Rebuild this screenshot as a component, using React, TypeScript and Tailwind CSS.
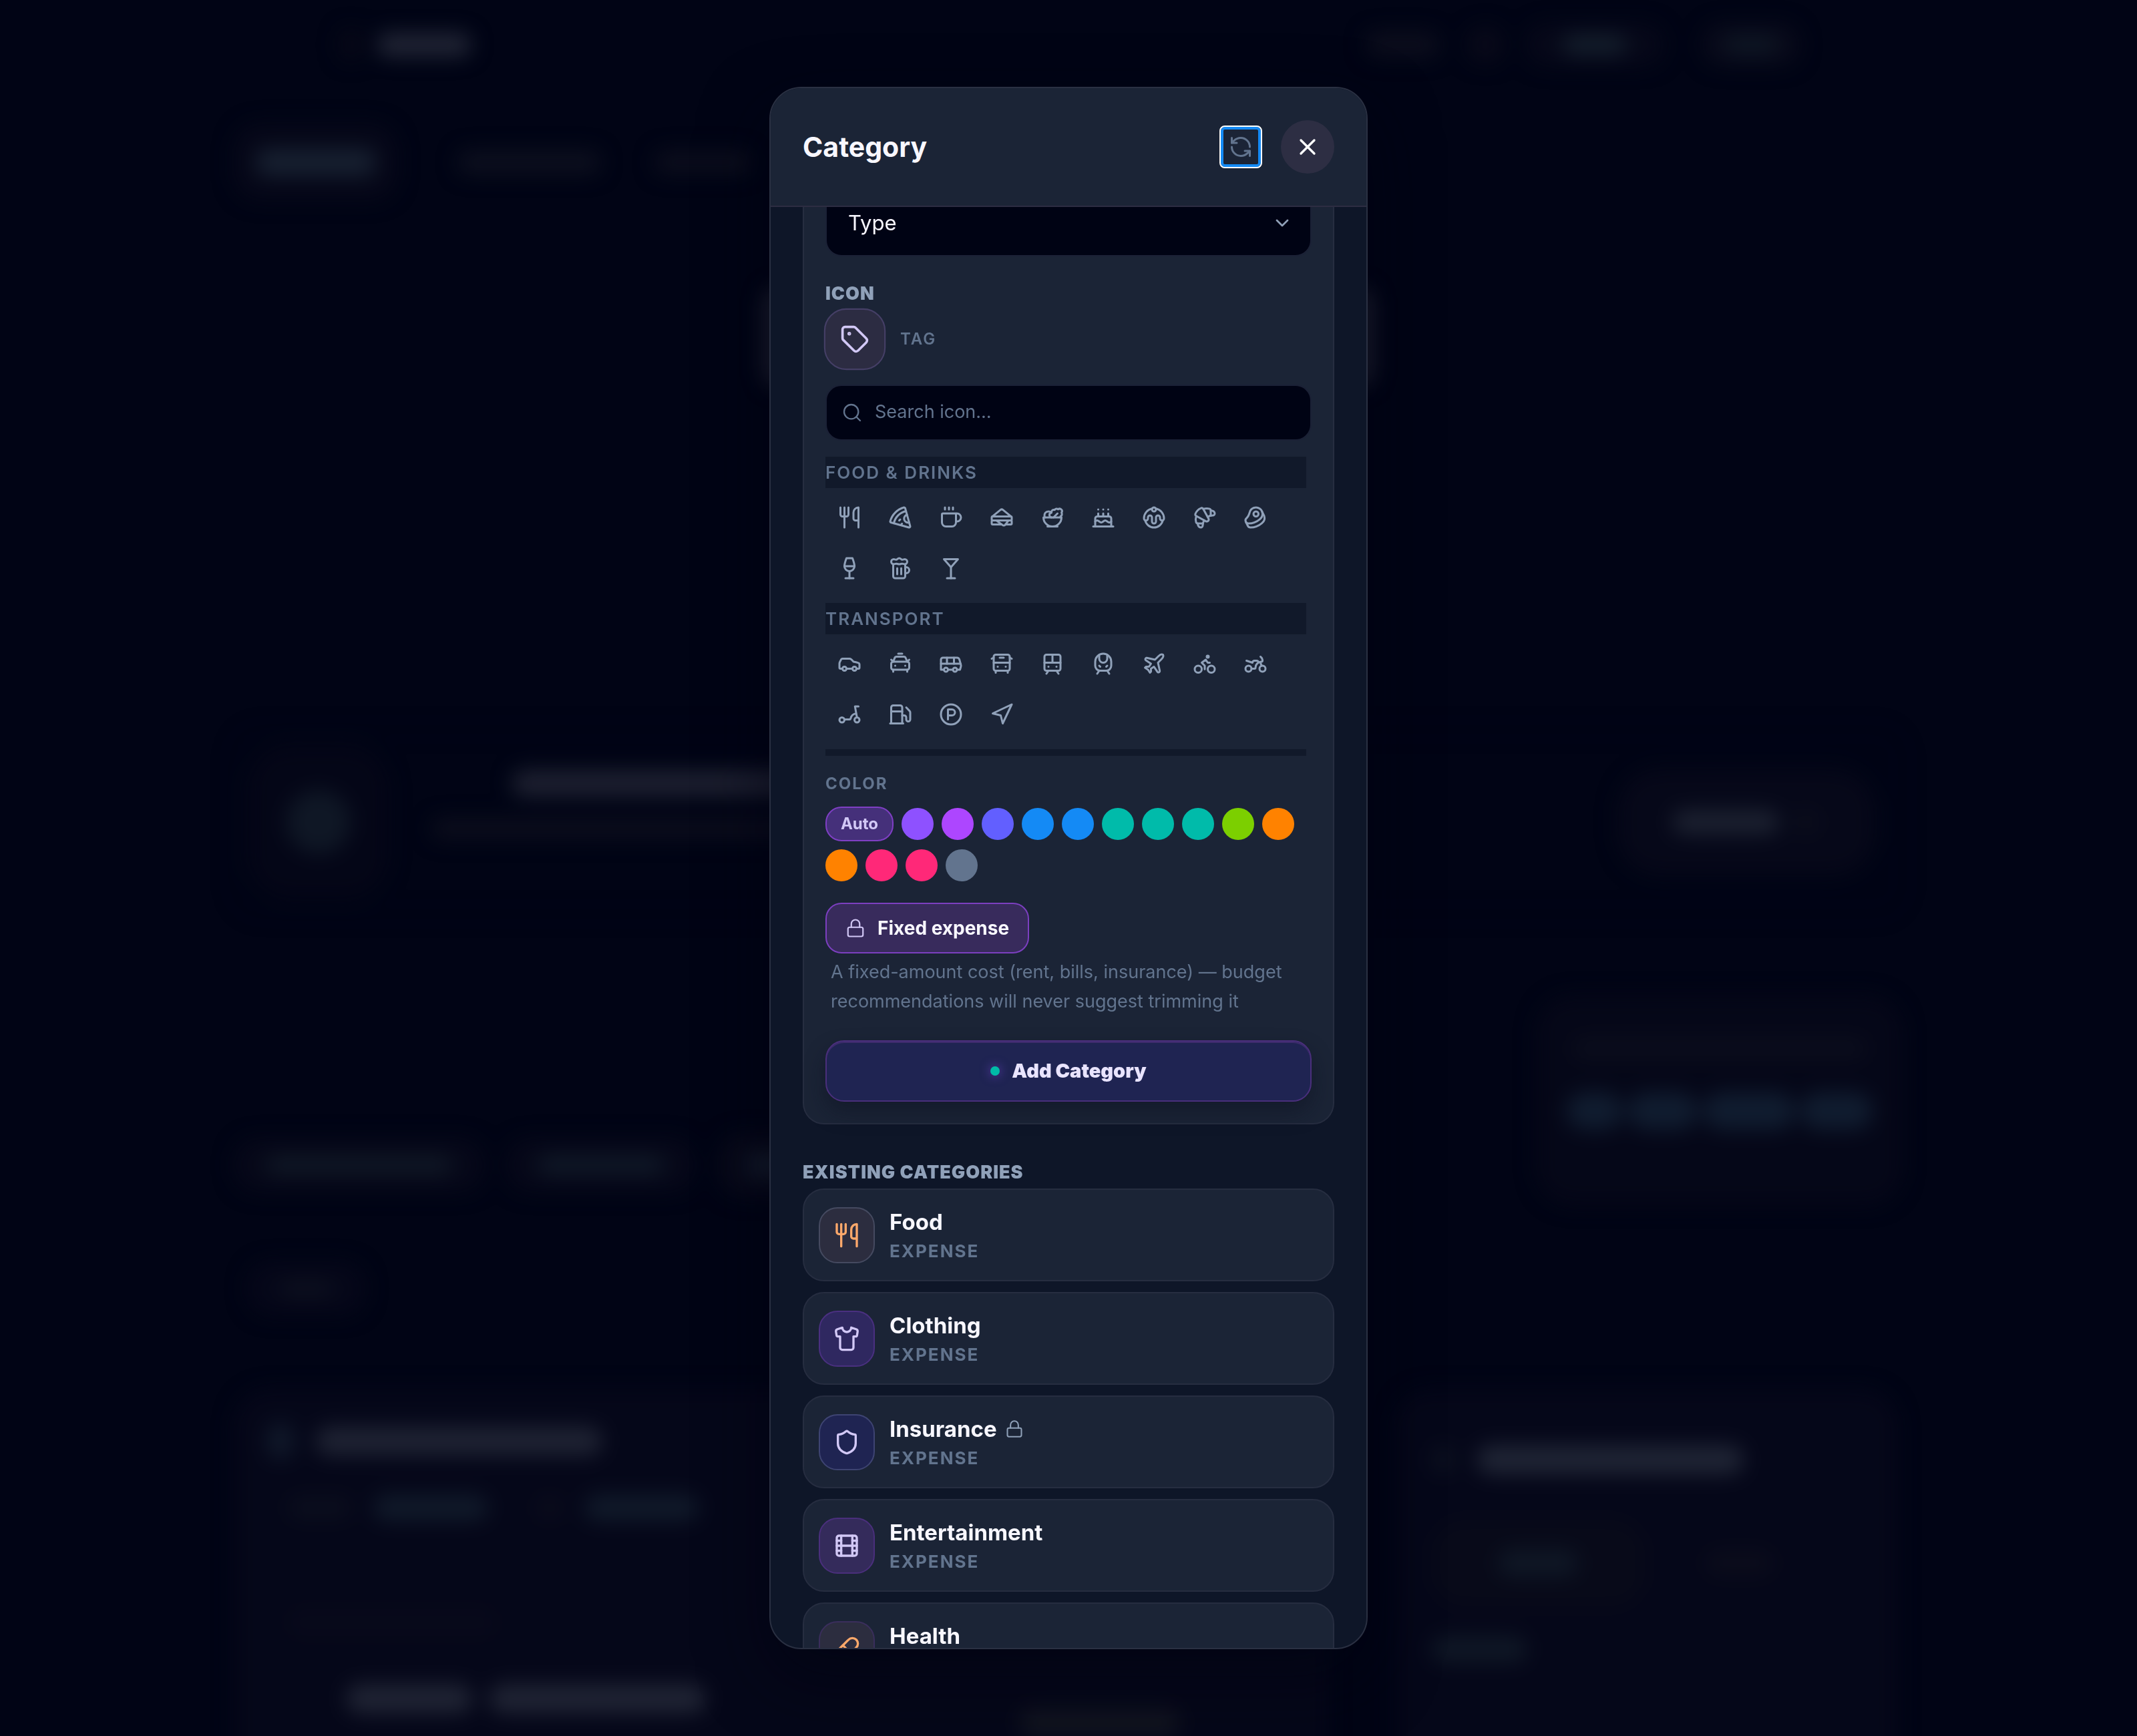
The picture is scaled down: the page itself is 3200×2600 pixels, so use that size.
import type { ReactNode } from 'react';
import {
  Beef,
  Beer,
  Bike,
  Bus,
  BusFront,
  Cake,
  Car,
  CarTaxiFront,
  ChevronDown,
  CircleParking,
  Coffee,
  Croissant,
  Dessert,
  Film,
  Fuel,
  Lock,
  Martini,
  Motorbike,
  Navigation,
  Pill,
  Pizza,
  Plane,
  RefreshCcw,
  Salad,
  Sandwich,
  Scooter,
  Search,
  Shield,
  Shirt,
  Tag,
  TrainFront,
  TramFront,
  Utensils,
  Wine,
  X,
  type LucideIcon,
} from 'lucide-react';
import clsx from 'clsx';

interface IconOption {
  name: string;
  icon: LucideIcon;
}

interface Category {
  name: string;
  icon: LucideIcon;
  tone: string;
  fixed?: boolean;
}

const foodIcons: IconOption[] = [
  { name: 'Utensils', icon: Utensils },
  { name: 'Pizza', icon: Pizza },
  { name: 'Coffee', icon: Coffee },
  { name: 'Sandwich', icon: Sandwich },
  { name: 'Salad', icon: Salad },
  { name: 'Cake', icon: Cake },
  { name: 'Dessert', icon: Dessert },
  { name: 'Croissant', icon: Croissant },
  { name: 'Beef', icon: Beef },
  { name: 'Wine', icon: Wine },
  { name: 'Beer', icon: Beer },
  { name: 'Martini', icon: Martini },
];

const transportIcons: IconOption[] = [
  { name: 'Car', icon: Car },
  { name: 'Taxi', icon: CarTaxiFront },
  { name: 'Minibus', icon: Bus },
  { name: 'Bus', icon: BusFront },
  { name: 'Tram', icon: TramFront },
  { name: 'Train', icon: TrainFront },
  { name: 'Plane', icon: Plane },
  { name: 'Bike', icon: Bike },
  { name: 'Motorbike', icon: Motorbike },
  { name: 'Scooter', icon: Scooter },
  { name: 'Fuel', icon: Fuel },
  { name: 'Parking', icon: CircleParking },
  { name: 'Navigation', icon: Navigation },
];

const swatches = [
  { name: 'Violet', color: 'bg-[#8e51ff]' },
  { name: 'Purple', color: 'bg-[#ad46ff]' },
  { name: 'Indigo', color: 'bg-[#625fff]' },
  { name: 'Blue', color: 'bg-[#148af5]' },
  { name: 'Sky', color: 'bg-[#148af5]' },
  { name: 'Cyan', color: 'bg-[#00bbaa]' },
  { name: 'Teal', color: 'bg-[#00bbaa]' },
  { name: 'Emerald', color: 'bg-[#00bbaa]' },
  { name: 'Lime', color: 'bg-[#7ccf00]' },
  { name: 'Amber', color: 'bg-[#ff8200]' },
  { name: 'Orange', color: 'bg-[#ff8200]' },
  { name: 'Rose', color: 'bg-[#ff2878]' },
  { name: 'Pink', color: 'bg-[#ff2878]' },
  { name: 'Slate', color: 'bg-[#62748e]' },
];

const categories: Category[] = [
  { name: 'Food', icon: Utensils, tone: 'border-[#454a60] bg-[#2c2d3f] text-[#ffa96b]' },
  { name: 'Clothing', icon: Shirt, tone: 'border-[#4a3080] bg-[#2f2860] text-[#d2c8f6]' },
  { name: 'Insurance', icon: Shield, tone: 'border-[#3e4472] bg-[#1f2452] text-[#d2c8f6]', fixed: true },
  { name: 'Entertainment', icon: Film, tone: 'border-[#4a2f7c] bg-[#342b5b] text-[#d2c8f6]' },
  { name: 'Health', icon: Pill, tone: 'border-[#3a2e5c] bg-[#2c2d3f] text-[#ffa96b]' },
];

function Blob({ className }: { className: string }) {
  return <div className={clsx('shrink-0 rounded-full', className)} />;
}

// Dashboard seen through the modal's backdrop
function Backdrop() {
  return (
    <div aria-hidden="true" className="h-screen overflow-hidden bg-[#010415]">
      <div className="blur-[15px]">
        <div className="mx-auto flex h-[134px] max-w-[2200px] items-center">
          <Blob className="ml-2 h-12 w-9 bg-[#070817]" />
          <Blob className="ml-5 h-9 w-[142px] bg-[#202434]" />
          <Blob className="ml-auto h-10 w-28 bg-[#0b0d1c]" />
          <Blob className="ml-10 h-14 w-14 bg-[#080919]" />
          <div className="ml-8 flex h-16 w-52 items-center justify-center rounded-full bg-[#060819]">
            <Blob className="h-8 w-24 bg-[#131d2b]" />
          </div>
          <div className="mr-1 ml-14 flex h-16 w-[148px] items-center justify-center rounded-full bg-[#080a1a]">
            <Blob className="h-8 w-20 bg-[#0d1523]" />
          </div>
        </div>

        <div className="mx-auto max-w-[2500px]">
          <div className="mt-[51px] flex h-[115px] items-center">
            <div className="flex h-full w-[245px] items-center justify-center rounded-[40px] bg-[#060819]">
              <Blob className="h-10 w-[180px] bg-[#172030]" />
            </div>
            <Blob className="ml-[90px] h-9 w-[215px] bg-[#0c0f1e]" />
            <Blob className="ml-20 h-9 w-[145px] bg-[#0b0d1c]" />
          </div>
          <div className="mx-auto mt-[130px] h-[150px] max-w-[916px] rounded-3xl bg-[#1b1e2e]" />

          <div className="mt-[512px] flex h-[278px] items-center rounded-[40px] border-2 border-[#04061a] px-5">
            <div className="flex h-[230px] w-[210px] items-center justify-center rounded-[64px] bg-[#040617]">
              <Blob className="h-24 w-24 bg-[#0f1725]" />
            </div>
            <div className="ml-[64px] flex-1 pb-[52px]">
              <Blob className="ml-[120px] h-10 w-[1200px] bg-[#1d2030]" />
              <Blob className="mt-8 h-8 w-[1300px] bg-[#0b0d1c]" />
            </div>
            <div className="mr-5 flex h-[160px] w-[386px] items-center rounded-[64px] bg-[#060819] pl-[82px]">
              <Blob className="h-9 w-40 bg-[#1c2130]" />
              <Blob className="ml-5 h-9 w-10 bg-[#0b0d1c]" />
            </div>
          </div>

          <div className="mt-[120px] flex h-[315px] items-end justify-between">
            <div className="flex h-[110px] items-center gap-8 pb-2.5">
              <div className="flex h-20 w-[376px] items-center justify-center rounded-[36px] bg-[#060819]">
                <Blob className="h-8 w-[280px] bg-[#0f1624]" />
              </div>
              <div className="flex h-20 w-[284px] items-center justify-center rounded-[36px] bg-[#060819]">
                <Blob className="h-8 w-[190px] bg-[#0f1726]" />
              </div>
              <div className="flex h-24 w-[280px] items-center justify-center rounded-[36px] bg-[#070919]">
                <Blob className="h-9 w-[190px] bg-[#131b2a]" />
              </div>
            </div>
            <div className="flex h-full w-[550px] flex-col items-center rounded-[56px] bg-[#050718] pt-16">
              <Blob className="h-8 w-[440px] bg-[#0b0d1c]" />
              <div className="mt-[50px] flex items-center gap-2">
                <Blob className="h-14 w-[84px] bg-[#101c2f]" />
                <Blob className="h-14 w-[104px] bg-[#101c2f]" />
                <Blob className="h-14 w-[138px] bg-[#101c2f]" />
                <Blob className="h-14 w-[108px] bg-[#101c2f]" />
              </div>
            </div>
          </div>

          <div className="mt-[85px] ml-5 flex h-20 w-[178px] items-center justify-center rounded-[36px] bg-[#050719]">
            <Blob className="h-7 w-20 bg-[#0c0f1e]" />
          </div>

          <div className="mt-[110px] flex h-[620px] justify-between">
            <div className="w-[1640px] rounded-[56px] bg-[#050719] pt-[50px] pl-[50px]">
              <div className="flex items-center">
                <Blob className="h-14 w-10 bg-[#101829]" />
                <Blob className="ml-8 h-11 w-[430px] bg-[#1e2232]" />
              </div>
              <div className="mt-[52px] flex items-center">
                <Blob className="ml-8 h-8 w-[95px] bg-[#0b0e1d]" />
                <Blob className="ml-8 h-10 w-[172px] bg-[#101929]" />
                <Blob className="ml-[72px] h-8 w-10 bg-[#0b0c1c]" />
                <Blob className="ml-8 h-10 w-[172px] bg-[#101929]" />
              </div>
              <Blob className="mt-[132px] ml-8 h-10 w-[310px] bg-[#08091a]" />
              <div className="mt-[34px] flex items-center">
                <Blob className="ml-[118px] h-11 w-[190px] bg-[#1f2333]" />
                <Blob className="ml-6 h-11 w-[325px] bg-[#1f2333]" />
                <Blob className="mt-[72px] ml-[470px] h-12 w-[240px] bg-[#10131f]" />
              </div>
            </div>
            <div className="mr-2 w-[755px] rounded-[56px] bg-[#050719] pt-[84px] pl-[56px]">
              <div className="flex items-center">
                <Blob className="h-11 w-9 bg-[#0c101f]" />
                <Blob className="ml-8 h-11 w-[400px] bg-[#1f2434]" />
              </div>
              <div className="mt-[68px] flex items-center">
                <div className="flex h-[130px] w-[320px] items-center justify-center rounded-[48px] bg-[#080a19]">
                  <Blob className="h-10 w-[120px] bg-[#0f1725]" />
                </div>
                <Blob className="ml-[92px] h-9 w-[100px] bg-[#0b0c1b]" />
              </div>
              <Blob className="mt-11 h-10 w-[144px] bg-[#0f1725]" />
            </div>
          </div>
        </div>
      </div>
    </div>
  );
}

function IconGroup({ title, icons }: { title: string; icons: IconOption[] }) {
  return (
    <section>
      <h4 className="bg-[#11192a] py-1 text-[26px] leading-[39px] font-semibold tracking-[2px] text-[#62748e] uppercase">
        {title}
      </h4>
      <div className="flex flex-wrap gap-1 pt-2 pb-4">
        {icons.map(({ name, icon: Icon }) => (
          <button
            key={name}
            type="button"
            aria-label={name}
            className="flex h-[72px] w-[72px] items-center justify-center rounded-2xl text-[#90a1b9]"
          >
            <Icon className="h-9 w-9" />
          </button>
        ))}
      </div>
    </section>
  );
}

function SectionLabel({ children }: { children: ReactNode }) {
  return (
    <h3 className="text-[27px] leading-[48px] font-black tracking-[1px] text-[#90a1b9] uppercase">{children}</h3>
  );
}

function CategoryForm() {
  return (
    <form className="-mt-[60px] rounded-[32px] border-2 border-[#262d40] bg-[#1b2436] p-8">
      <div className="relative">
        <select
          aria-label="Type"
          className="h-[100px] w-full appearance-none rounded-3xl border-2 border-[#1b2136] bg-[#000314] px-8 text-[31px] text-[#f8f7ff]"
        >
          <option>Type</option>
        </select>
        <ChevronDown className="pointer-events-none absolute top-[34px] right-7 h-8 w-8 text-[#90a1b9]" />
      </div>

      <div className="mt-8">
        <SectionLabel>Icon</SectionLabel>
        <div className="flex items-center gap-6">
          <button
            type="button"
            aria-label="Selected icon"
            className="flex h-[88px] w-[88px] scale-105 items-center justify-center rounded-[32px] border-2 border-[#453f66] bg-[#2c2c42] text-[#d2c8f6]"
          >
            <Tag className="h-[42px] w-[42px]" />
          </button>
          <span className="text-[24px] font-semibold tracking-[2px] text-[#62748e] uppercase">Tag</span>
        </div>
      </div>

      <div className="relative mt-6">
        <Search className="absolute top-[26px] left-6 h-8 w-8 text-[#62748e]" strokeWidth={1.75} />
        <input
          type="text"
          aria-label="Search icon"
          placeholder="Search icon…"
          className="block h-[84px] w-full rounded-3xl border-2 border-[#1b2136] bg-[#000314] pr-6 pb-1 pl-[72px] text-[27px] text-white placeholder:text-[#62748e]"
        />
      </div>

      <div className="mt-6 h-[448px] overflow-hidden pr-2">
        <IconGroup title="Food & Drinks" icons={foodIcons} />
        <IconGroup title="Transport" icons={transportIcons} />
        <div className="h-12 bg-[#11192a]" />
      </div>

      <fieldset className="mt-6">
        <legend className="text-[24px] leading-9 font-bold tracking-[2px] text-[#62748e] uppercase">Color</legend>
        <div className="mt-4 flex flex-wrap items-center gap-3">
          <button
            type="button"
            className="h-[52px] w-[102px] rounded-3xl border-2 border-[#7f3fc4] bg-[#45307a] text-[24px] font-bold text-[#d2c8f6]"
          >
            Auto
          </button>
          {swatches.map((swatch) => (
            <button
              key={swatch.name}
              type="button"
              aria-label={swatch.name}
              className={clsx('h-12 w-12 rounded-full', swatch.color)}
            />
          ))}
        </div>
      </fieldset>

      <button
        type="button"
        className="mt-8 flex h-[76px] items-center gap-[18px] rounded-3xl border-2 border-[#7c3fc0] bg-[#382b5c] px-7 text-[28px] font-bold text-[#f8f7ff]"
      >
        <Lock className="h-[30px] w-[30px] text-[#d2c8f6]" strokeWidth={1.75} />
        Fixed expense
      </button>
      <p className="mt-1.5 px-2 text-[27px] leading-[44px] text-[#62748e]">
        A fixed-amount cost (rent, bills, insurance) — budget recommendations will never suggest trimming it
      </p>

      <button
        type="submit"
        className="mt-9 flex h-[92px] w-full items-center justify-center gap-[18px] rounded-[28px] border-2 border-[#4a2f7c] bg-[#1f2452] text-[29px] font-black text-[#e9e4ff] shadow-[0_16px_32px_rgba(10,16,32,0.45),inset_0_2px_0_rgba(120,60,160,0.35)]"
      >
        <span className="h-3.5 w-3.5 rounded-full bg-[#00bba7] shadow-[0_0_16px_rgba(142,81,255,0.6)]" />
        Add Category
      </button>
    </form>
  );
}

function CategoryRow({ category }: { category: Category }) {
  const Icon = category.icon;
  return (
    <li className="flex h-[139px] shrink-0 items-center gap-[22px] rounded-[32px] border-2 border-[#262d40] bg-[#1b2436] px-[22px]">
      <div
        className={clsx(
          'flex h-[84px] w-[84px] items-center justify-center rounded-[28px] border-2',
          category.tone
        )}
      >
        <Icon className="h-10 w-10" />
      </div>
      <div>
        <div className="flex items-center gap-3 text-[33px] leading-[48px] font-bold text-[#f8f7ff]">
          {category.name}
          {category.fixed && <Lock className="h-7 w-7 text-[#90a1b9]" strokeWidth={1.75} aria-label="Fixed" />}
        </div>
        <div className="text-[26px] leading-[39px] font-bold tracking-[2px] text-[#62748e] uppercase">Expense</div>
      </div>
    </li>
  );
}

export default function App() {
  return (
    <div className="font-[Inter,sans-serif]">
      <Backdrop />
      <div className="fixed inset-0 flex items-center justify-center">
        <div
          role="dialog"
          aria-modal="true"
          aria-labelledby="dialog-title"
          className="flex h-[90vh] w-full max-w-4xl flex-col overflow-hidden rounded-[48px] border-2 border-[#2a3042] bg-[#0e1628] shadow-[0_40px_100px_rgba(0,3,16,0.6)]"
        >
          <header className="flex shrink-0 items-center border-b-2 border-[#2d2d42] bg-[#1b2436] p-12">
            <h2 id="dialog-title" className="text-[41px] leading-[48px] font-bold text-[#f8f7ff]">
              Category
            </h2>
            <button
              type="button"
              aria-label="Reset"
              className="ml-auto flex h-16 w-16 items-center justify-center rounded-lg border-2 border-white text-[#62748e] shadow-[inset_0_0_0_4px_#148af5]"
            >
              <RefreshCcw className="h-9 w-9" />
            </button>
            <button
              type="button"
              aria-label="Close"
              className="ml-7 flex h-20 w-20 items-center justify-center rounded-full bg-[#2d2e43] text-white"
            >
              <X className="h-10 w-10" />
            </button>
          </header>

          <div className="min-h-0 flex-1 overflow-hidden px-12">
            <CategoryForm />
            <section className="mt-12">
              <SectionLabel>Existing categories</SectionLabel>
              <ul className="flex flex-col gap-4">
                {categories.map((category) => (
                  <CategoryRow key={category.name} category={category} />
                ))}
              </ul>
            </section>
          </div>
        </div>
      </div>
    </div>
  );
}
